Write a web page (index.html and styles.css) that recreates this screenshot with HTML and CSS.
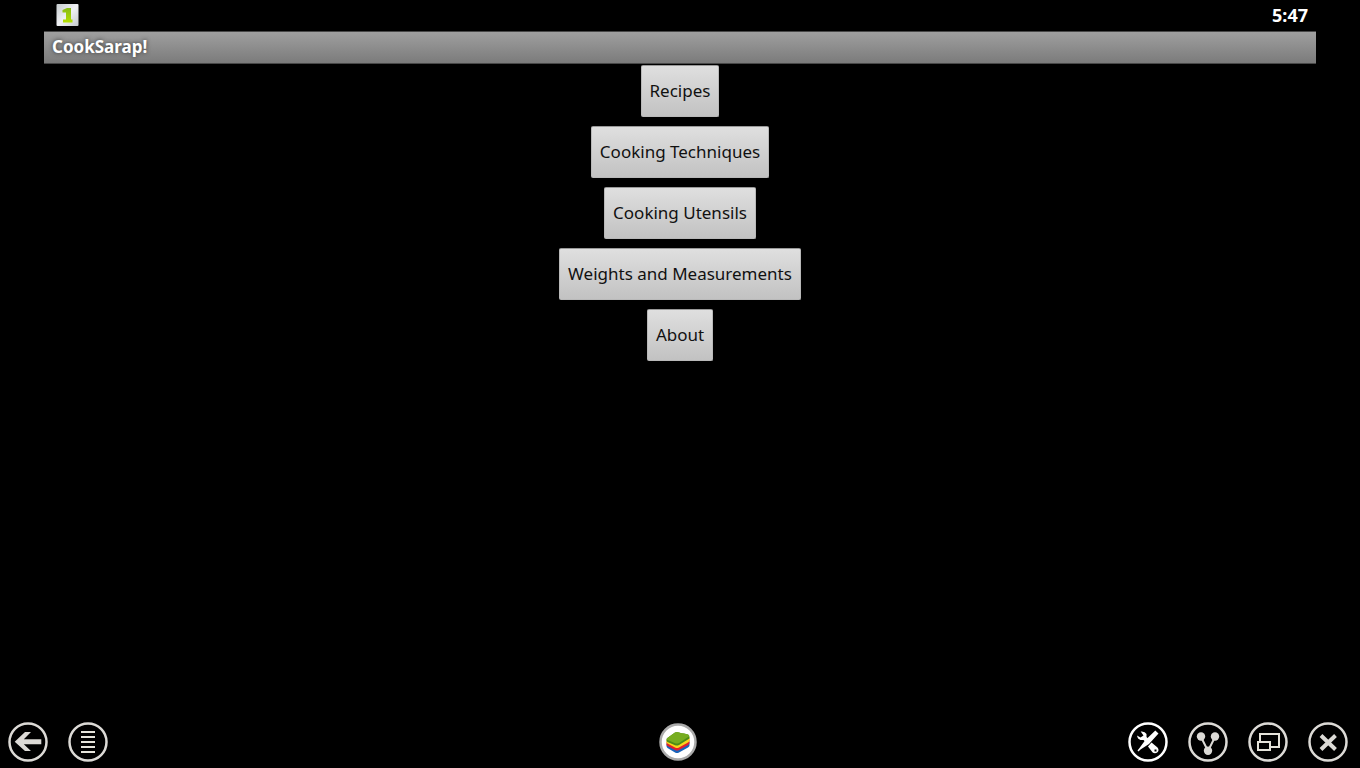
FILE: index.html
```html
<!DOCTYPE html>
<html lang="en">
<head>
<meta charset="utf-8">
<meta name="viewport" content="width=device-width, initial-scale=1">
<title>CookSarap!</title>
<link rel="stylesheet" href="styles.css">
</head>
<body>
<div class="app">
  <header class="status-bar">
    <svg class="status-icon" viewBox="0 0 22 22" aria-hidden="true">
      <defs>
        <linearGradient id="tile" x1="0" y1="0" x2="1" y2="1"><stop offset="0" stop-color="#c5cbce"/><stop offset=".5" stop-color="#f0f1f4"/><stop offset="1" stop-color="#c4c9cc"/></linearGradient>
        <linearGradient id="one" x1="0" y1="0" x2="0" y2="1"><stop offset="0" stop-color="#88bb18"/><stop offset="1" stop-color="#b4e000"/></linearGradient>
      </defs>
      <rect width="22" height="22" rx="1" fill="url(#tile)"/>
      <path d="M6 6L10.500 4H14.500V15.500H16V18.500H6.500V15.500H9.500V8.500H6Z" fill="url(#one)"/>
    </svg>
    <time class="clock">5:47</time>
  </header>
  <h1 class="title-bar">CookSarap!</h1>
  <main class="menu">
    <button class="menu-button" type="button">Recipes</button>
    <button class="menu-button" type="button">Cooking Techniques</button>
    <button class="menu-button" type="button">Cooking Utensils</button>
    <button class="menu-button" type="button">Weights and Measurements</button>
    <button class="menu-button" type="button">About</button>
  </main>
</div>
<footer class="dock">
  <div class="dock-group">
    <button class="dock-button" type="button" aria-label="Back">
      <svg viewBox="0 0 40 40"><circle class="ring" cx="20" cy="20" r="18.500"/><path class="solid" d="M6.700 19.700L17 10H23L15.800 17.200H33.300V22.200H15.800L23 29H17Z"/></svg>
    </button>
    <button class="dock-button" type="button" aria-label="Menu">
      <svg viewBox="0 0 40 40"><circle class="ring" cx="20" cy="20" r="18.500"/><path class="line" d="M13 10H27M13 15H27M13 20H27M13 25H27M13 30H27"/></svg>
    </button>
  </div>
  <button class="dock-button home" type="button" aria-label="Home">
    <svg viewBox="0 0 40 40">
      <circle cx="20" cy="20" r="17.500" fill="#fff" stroke="#aaa" stroke-width="2.500"/>
      <path d="M8.500 21.500L19 27L31.500 20V23.500Q31.500 24.500 30 25.500L21 30.500Q19 31.500 17 30.500L9.500 26Q8.500 25 8.500 24Z" fill="#1864bb"/>
      <path d="M8.500 19.500L19 24L31.500 17.500V21Q31.500 22 30 23L21 28Q19 29 17 28L9.500 24Q8.500 23.500 8.500 22.500Z" fill="#e3202b"/>
      <path d="M8.500 18L19 22L31.500 15.500V18.500Q31.500 19.500 30 20.500L21 25.500Q19 26.500 17 25.500L9.500 21.500Q8.500 21 8.500 20Z" fill="#f8d51b"/>
      <path d="M8.500 17.500Q8.500 16.500 10 15.500L17 10.500Q19 9.500 21 10.500Q23.500 11.500 26 11.500L30 12.500Q31.500 13 31.500 15V16.500L21 23Q19 24 17 23.200L9.500 20Q8.500 19.500 8.500 18.500Z" fill="#4c8c17"/>
      <path d="M8.500 17.500Q8.500 16.500 10 15.500L17 10.500Q19 9.500 21 10.500Q23.500 11.500 26 11.500L30 12.500Q31.500 13 31 14.500L21 21Q19 22 17 21.200Z" fill="#77ad20"/>
    </svg>
  </button>
  <div class="dock-group dock-group-end">
    <button class="dock-button" type="button" aria-label="Settings">
      <svg viewBox="0 0 40 40"><circle class="ring bright" cx="20" cy="20" r="18.500"/>
        <path class="white" d="M9 13.500L12.500 15.500L15.500 13.500L12.700 9.500Q17 9 18.500 12V15L21 17.500L18 20.500L15.500 18H12.500Q9.500 17 9 13.500Z"/>
        <path class="white" d="M27.300 8.500L30.500 11.500L21 22L12.500 27.500L10.500 29.500L9.500 28.500L11.500 26L17 18.500Z"/>
        <path class="white" fill-rule="evenodd" d="M23.500 20.500L29.500 25.500Q31.500 28 29.500 30.300Q27 32 24.700 30.500L20 24.500ZM26.500 27.500V29.500H28.500V27.500Z"/>
      </svg>
    </button>
    <button class="dock-button" type="button" aria-label="Share">
      <svg viewBox="0 0 40 40"><circle class="ring" cx="20" cy="20" r="18.500"/><path class="link" d="M13 15L20 29L27 15"/><circle class="solid" cx="13" cy="14.500" r="4.200"/><circle class="solid" cx="27" cy="14.500" r="4.200"/><circle class="solid" cx="20" cy="28.700" r="4.200"/></svg>
    </button>
    <button class="dock-button" type="button" aria-label="Resize window">
      <svg viewBox="0 0 40 40"><circle class="ring" cx="20" cy="20" r="18.500"/><path class="line" d="M12 19V12H31V25H22M10 20H22V28H10Z"/></svg>
    </button>
    <button class="dock-button" type="button" aria-label="Close">
      <svg viewBox="0 0 40 40"><circle class="ring" cx="20" cy="20" r="18.500"/><path class="cross" d="M13 13.500L27.500 27.500M27.500 13.500L13 27.500"/></svg>
    </button>
  </div>
</footer>
</body>
</html>
```
FILE: styles.css
```css
* {
  box-sizing: border-box;
}

body {
  display: flex;
  flex-direction: column;
  min-height: 100vh;
  margin: 0;
  background: #000;
  color: #fff;
  font-family: "Noto Sans", "Open Sans", sans-serif;
}

.app {
  flex: 1;
  margin: 0 44px;
}

.status-bar {
  display: flex;
  align-items: center;
  justify-content: space-between;
  padding: 3px 8px 4px 12px;
}

.status-icon {
  width: 23px;
  height: 22px;
}

.clock {
  font-size: 18px;
  font-weight: 700;
  line-height: 24px;
}

.title-bar {
  margin: 0;
  padding: 0 8px 2px;
  border: 1px solid #484848;
  border-width: 1px 0;
  background: linear-gradient(#9f9f9f, #7b7b7b);
  font-size: 17px;
  font-weight: 700;
  line-height: 29px;
  text-shadow: 0 0 4px #333;
}

.menu {
  display: flex;
  flex-direction: column;
  align-items: center;
  gap: 9px;
  padding-top: 1px;
}

.menu-button {
  padding: 0 8px;
  border: 1px solid #b9b9b9;
  border-top-color: #999;
  border-radius: 2px;
  background: linear-gradient(#dfdfdf, #c2c2c2);
  color: #111;
  font-family: inherit;
  font-size: 17px;
  line-height: 50px;
}

.dock {
  display: grid;
  grid-template-columns: 1fr auto 1fr;
  align-items: center;
  padding: 6px 12px 6px 8px;
}

.dock-group {
  display: flex;
  gap: 20px;
}

.dock-group-end {
  justify-content: flex-end;
}

.dock-button {
  display: block;
  width: 40px;
  height: 40px;
  padding: 0;
  border: 0;
  border-radius: 50%;
  background: none;
}

.dock-button svg {
  display: block;
  width: 100%;
  height: 100%;
}

.ring {
  fill: none;
  stroke: #dcdad6;
  stroke-width: 2.5;
}

.bright {
  stroke: #fff;
}

.solid {
  fill: #dcdad6;
}

.white {
  fill: #fff;
}

.line {
  fill: none;
  stroke: #e5e3da;
  stroke-width: 2;
}

.link {
  fill: none;
  stroke: #dcdad6;
  stroke-width: 2;
}

.cross {
  fill: none;
  stroke: #dcdad6;
  stroke-width: 4;
}
```
